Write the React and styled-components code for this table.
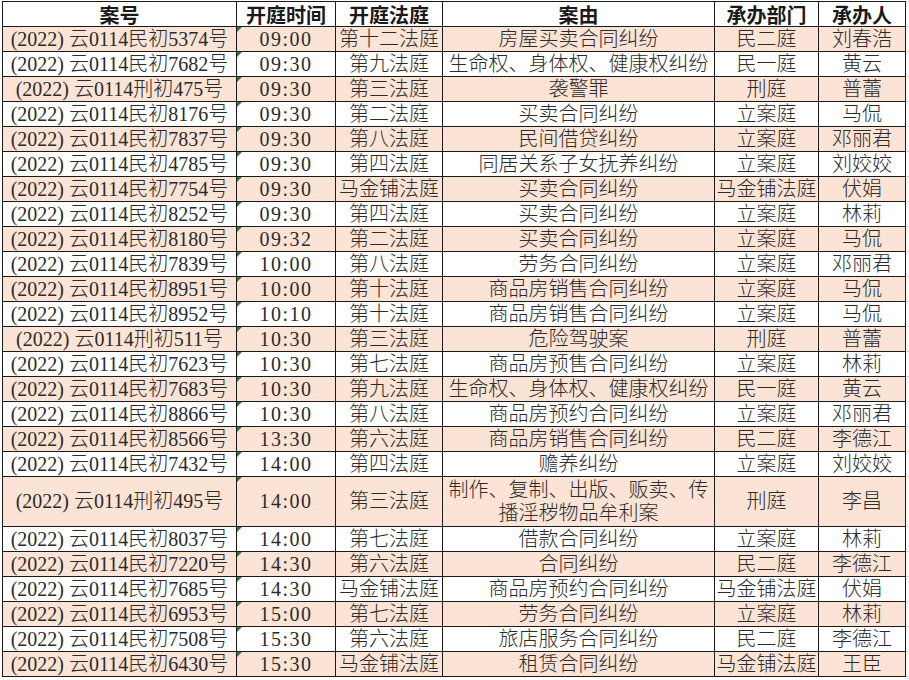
import React from 'react';
import styled, { createGlobalStyle } from 'styled-components';

const GlobalStyle = createGlobalStyle`
  html, body {
    margin: 0;
    padding: 0;
    background: #ffffff;
  }
  body {
    font-family: 'Liberation Serif', 'Noto Sans CJK SC', serif;
    color: #2b2b2b;
  }
`;

const Sheet = styled.div`
  padding: 1px 0 0 2px;
  width: 909px;
  box-sizing: border-box;
  overflow: hidden;
`;

const Table = styled.table`
  border-collapse: collapse;
  table-layout: fixed;
  width: 907px;
  font-size: 20px;
  line-height: 23px;
`;

const Cell = styled.td`
  border: 1px solid #1a1a1a;
  padding: 0 1px;
  height: ${(p) => (p.$tall ? 49 : 24)}px;
  text-align: center;
  vertical-align: middle;
  font-weight: 300;
  white-space: ${(p) => (p.$wrap ? 'normal' : 'nowrap')};
  overflow: hidden;
  background: ${(p) => (p.$shade ? '#fbe3d5' : '#ffffff')};
  letter-spacing: ${(p) => (p.$spaced ? '1.5px' : '0')};
  position: relative;

  &::before {
    content: ${(p) => (p.$flag ? "''" : 'none')};
    position: absolute;
    left: 0;
    top: 0;
    border-top: 5px solid #2f7d2f;
    border-right: 5px solid transparent;
  }
`;

const HeadCell = styled.th`
  border: 1px solid #1a1a1a;
  height: 24px;
  padding: 0;
  font-weight: 700;
  text-align: center;
  white-space: nowrap;
  background: #ffffff;
  color: #1a1a1a;
  font-family: 'Noto Sans CJK SC', serif;
  font-size: 20px;
`;

const Filler = styled.td`
  border-bottom: 1px solid #d4d4d4;
  border-top: 1px solid #d4d4d4;
  padding: 0;
`;

const cols = [234, 99, 107, 272, 104, 87, 4];
const heads = ['案号', '开庭时间', '开庭法庭', '案由', '承办部门', '承办人'];

const rows = [
  ['(2022) 云0114民初5374号', '09:00', '第十二法庭', '房屋买卖合同纠纷', '民二庭', '刘春浩'],
  ['(2022) 云0114民初7682号', '09:30', '第九法庭', '生命权、身体权、健康权纠纷', '民一庭', '黄云'],
  ['(2022) 云0114刑初475号', '09:30', '第三法庭', '袭警罪', '刑庭', '普蕾'],
  ['(2022) 云0114民初8176号', '09:30', '第二法庭', '买卖合同纠纷', '立案庭', '马侃'],
  ['(2022) 云0114民初7837号', '09:30', '第八法庭', '民间借贷纠纷', '立案庭', '邓丽君'],
  ['(2022) 云0114民初4785号', '09:30', '第四法庭', '同居关系子女抚养纠纷', '立案庭', '刘姣姣'],
  ['(2022) 云0114民初7754号', '09:30', '马金铺法庭', '买卖合同纠纷', '马金铺法庭', '伏娟'],
  ['(2022) 云0114民初8252号', '09:30', '第四法庭', '买卖合同纠纷', '立案庭', '林莉'],
  ['(2022) 云0114民初8180号', '09:32', '第二法庭', '买卖合同纠纷', '立案庭', '马侃'],
  ['(2022) 云0114民初7839号', '10:00', '第八法庭', '劳务合同纠纷', '立案庭', '邓丽君'],
  ['(2022) 云0114民初8951号', '10:00', '第十法庭', '商品房销售合同纠纷', '立案庭', '马侃'],
  ['(2022) 云0114民初8952号', '10:10', '第十法庭', '商品房销售合同纠纷', '立案庭', '马侃'],
  ['(2022) 云0114刑初511号', '10:30', '第三法庭', '危险驾驶案', '刑庭', '普蕾'],
  ['(2022) 云0114民初7623号', '10:30', '第七法庭', '商品房预售合同纠纷', '立案庭', '林莉'],
  ['(2022) 云0114民初7683号', '10:30', '第九法庭', '生命权、身体权、健康权纠纷', '民一庭', '黄云'],
  ['(2022) 云0114民初8866号', '10:30', '第八法庭', '商品房预约合同纠纷', '立案庭', '邓丽君'],
  ['(2022) 云0114民初8566号', '13:30', '第六法庭', '商品房销售合同纠纷', '民二庭', '李德江'],
  ['(2022) 云0114民初7432号', '14:00', '第四法庭', '赡养纠纷', '立案庭', '刘姣姣'],
  ['(2022) 云0114刑初495号', '14:00', '第三法庭', '制作、复制、出版、贩卖、传播淫秽物品牟利案', '刑庭', '李昌'],
  ['(2022) 云0114民初8037号', '14:00', '第七法庭', '借款合同纠纷', '立案庭', '林莉'],
  ['(2022) 云0114民初7220号', '14:30', '第六法庭', '合同纠纷', '民二庭', '李德江'],
  ['(2022) 云0114民初7685号', '14:30', '马金铺法庭', '商品房预约合同纠纷', '马金铺法庭', '伏娟'],
  ['(2022) 云0114民初6953号', '15:00', '第七法庭', '劳务合同纠纷', '立案庭', '林莉'],
  ['(2022) 云0114民初7508号', '15:30', '第六法庭', '旅店服务合同纠纷', '民二庭', '李德江'],
  ['(2022) 云0114民初6430号', '15:30', '马金铺法庭', '租赁合同纠纷', '马金铺法庭', '王臣'],
];

const App = () => (
  <Sheet>
    <GlobalStyle />
    <Table>
      <colgroup>
        {cols.map((w, i) => (
          <col key={i} style={{ width: w }} />
        ))}
      </colgroup>
      <thead>
        <tr>
          {heads.map((h) => (
            <HeadCell key={h}>{h}</HeadCell>
          ))}
          <Filler />
        </tr>
      </thead>
      <tbody>
        {rows.map((r, i) => {
          const shade = i % 2 === 0;
          const tall = r[3].length > 13;
          return (
            <tr key={r[0]}>
              <Cell $shade={shade} $tall={tall}>{r[0]}</Cell>
              <Cell $shade={shade} $tall={tall} $spaced $flag>{r[1]}</Cell>
              <Cell $shade={shade} $tall={tall}>{r[2]}</Cell>
              <Cell $shade={shade} $tall={tall} $wrap={tall}>{r[3]}</Cell>
              <Cell $shade={shade} $tall={tall}>{r[4]}</Cell>
              <Cell $shade={shade} $tall={tall}>{r[5]}</Cell>
              <Filler />
            </tr>
          );
        })}
      </tbody>
    </Table>
  </Sheet>
);

export default App;
